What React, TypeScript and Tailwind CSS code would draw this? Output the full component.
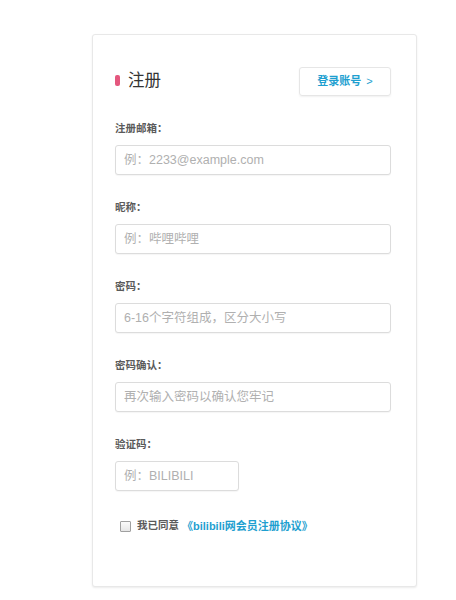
import React from "react";

const font = { fontFamily: '"Liberation Sans", "Noto Sans CJK SC", sans-serif' };

function Field({ label, placeholder, short }: { label: string; placeholder: string; short?: boolean }) {
  return (
    <div className="flex flex-col">
      <div className="h-[14px] leading-[14px] text-[10.5px] font-bold text-[#5a5a5a] mb-[10px]">{label}</div>
      <input
        readOnly
        placeholder={placeholder}
        className={`${short ? "w-[124px]" : "w-[276px]"} h-[30px] rounded-[3px] border border-[#dcdcdc] shadow-[0_1px_1px_rgba(0,0,0,0.04)] bg-white px-[8px] text-[12.5px] text-[#333] placeholder:text-[#b0b0b0] outline-none`}
        style={font}
      />
    </div>
  );
}

export default function App() {
  return (
    <div className="w-[456px] h-[600px] bg-white pt-[34px] pl-[92px]" style={font}>
      <div className="w-[325px] h-[553px] rounded-[3px] border border-[#e8e8e8] shadow-[0_1px_2px_rgba(0,0,0,0.08)] bg-white pt-[32px] pl-[22px]">
        <div className="flex items-center w-[276px] h-[29px] justify-between">
          <div className="flex items-center">
            <span className="w-[5px] h-[11px] rounded-[2px] bg-[#e4577e] mt-[-2px]" />
            <span className="ml-[8px] text-[16.5px] text-[#333] leading-none mt-[-2px]">注册</span>
          </div>
          <div className="w-[92px] h-[29px] rounded-[3px] border border-[#e6e6e6] shadow-[0_1px_2px_rgba(0,0,0,0.06)] flex items-center justify-center text-[11px] font-bold text-[#1e9fd0]">
            登录账号 <span className="ml-[5px] font-normal">&gt;</span>
          </div>
        </div>
        <div className="mt-[25px] flex flex-col gap-[25px]">
          <Field label="注册邮箱：" placeholder="例：2233@example.com" />
          <Field label="昵称：" placeholder="例：哔哩哔哩" />
          <Field label="密码：" placeholder="6-16个字符组成，区分大小写" />
          <Field label="密码确认：" placeholder="再次输入密码以确认您牢记" />
          <Field label="验证码：" placeholder="例：BILIBILI" short />
        </div>
        <div className="mt-[28px] h-[14px] flex items-center">
          <span className="ml-[5px] w-[11px] h-[11px] border border-[#a0a0a0] rounded-[1px] bg-gradient-to-b from-[#fafafa] to-[#e6e6e6]" />
          <span className="ml-[6px] text-[10.5px] font-bold text-[#5a5a5a]">我已同意</span>
          <span className="ml-[3px] text-[11px] font-bold text-[#1e9fd0]">《bilibili网会员注册协议》</span>
        </div>
      </div>
    </div>
  );
}
